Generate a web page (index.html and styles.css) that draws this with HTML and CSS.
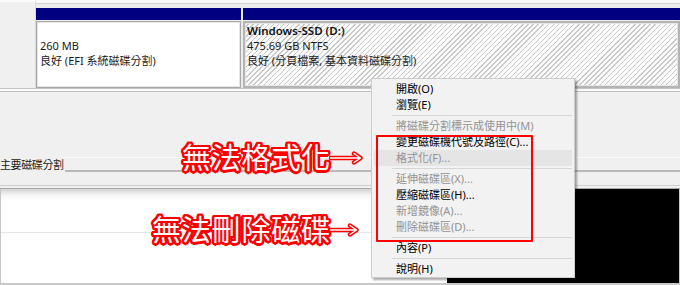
FILE: index.html
```html
<!DOCTYPE html>
<html lang="zh-Hant">
<head>
<meta charset="utf-8">
<title>磁碟管理</title>
<link rel="stylesheet" href="styles.css">
</head>
<body>
<div class="screen">
  <div class="disk">
    <div class="disk-label"></div>
    <div class="parts">
      <div class="part part-efi">
        <div class="part-bar"></div>
        <div class="part-body">
          <div class="pline">&nbsp;</div>
          <div class="pline">260 MB</div>
          <div class="pline">良好 (EFI 系統磁碟分割)</div>
        </div>
      </div>
      <div class="part part-main">
        <div class="part-bar"></div>
        <div class="part-body hatched">
          <div class="pline pname">Windows-SSD (D:)</div>
          <div class="pline">475.69 GB NTFS</div>
          <div class="pline">良好 (分頁檔案, 基本資料磁碟分割)</div>
        </div>
      </div>
    </div>
  </div>
  <div class="disk-sep"></div>
  <div class="mid">
    <div class="legend">
      <span class="legend-text">主要磁碟分割</span>
      <span class="legend-bar"></span>
    </div>
  </div>
  <div class="divider"></div>
  <div class="lower">
    <div class="lower-left"><div class="hline"></div></div>
    <div class="lower-black"></div>
  </div>
  <div class="bottom-edge"></div>

  <div class="menu">
    <div class="item">開啟(O)</div>
    <div class="item">瀏覽(E)</div>
    <div class="sep"></div>
    <div class="item off">將磁碟分割標示成使用中(M)</div>
    <div class="item">變更磁碟機代號及路徑(C)...</div>
    <div class="item off hover">格式化(F)...</div>
    <div class="sep"></div>
    <div class="item off">延伸磁碟區(X)...</div>
    <div class="item">壓縮磁碟區(H)...</div>
    <div class="item off">新增鏡像(A)...</div>
    <div class="item off">刪除磁碟區(D)...</div>
    <div class="sep"></div>
    <div class="item">內容(P)</div>
    <div class="sep"></div>
    <div class="item">說明(H)</div>
  </div>
  <div class="redbox"></div>

  <div class="note note1">
    <span class="note-text">無法格式化</span>
    <svg class="arrow a1" width="34" height="14" viewBox="0 0 34 14">
      <path d="M1.5 7 H31 M25 2.5 L31.5 7 L25 11.5" fill="none" stroke="#f00" stroke-width="4.5" stroke-linecap="round" stroke-linejoin="round"/>
      <path d="M1.5 7 H31 M25 2.5 L31.5 7 L25 11.5" fill="none" stroke="#fff" stroke-width="1.4" stroke-linecap="round" stroke-linejoin="round"/>
    </svg>
  </div>
  <div class="note note2">
    <span class="note-text">無法刪除磁碟</span>
    <svg class="arrow a2" width="30" height="14" viewBox="0 0 30 14">
      <path d="M1.5 7 H27 M21 2.5 L27.5 7 L21 11.5" fill="none" stroke="#f00" stroke-width="4.5" stroke-linecap="round" stroke-linejoin="round"/>
      <path d="M1.5 7 H27 M21 2.5 L27.5 7 L21 11.5" fill="none" stroke="#fff" stroke-width="1.4" stroke-linecap="round" stroke-linejoin="round"/>
    </svg>
  </div>
</div>
</body>
</html>
```

FILE: styles.css
```css
* { box-sizing: border-box; }
html, body { margin: 0; padding: 0; }
body {
  font-family: "Noto Sans", "Noto Sans CJK TC", sans-serif;
  font-size: 11px;
  color: #000;
  background: #f0f0f0;
}
.screen {
  position: relative;
  width: 680px;
  height: 285px;
  overflow: hidden;
  display: flex;
  flex-direction: column;
  background: #f0f0f0;
}

/* disk row */
.disk {
  height: 88px;
  display: flex;
  flex: none;
}
.disk-label {
  width: 36px;
  background: #f0f0f0;
  border-top: 2px solid #fbfbfb;
  border-right: 1px solid #d8d8d8;
}
.parts {
  flex: 1;
  display: flex;
  gap: 2px;
  padding-top: 5px;
  border-top: 3px solid #f9f9f9;
  background: #ececec;
  box-shadow: inset 0 1px 0 #d6d6d6;
}
.part {
  display: flex;
  flex-direction: column;
}
.part-efi { width: 205px; }
.part-main { flex: 1; }
.part-bar {
  height: 12px;
  background: #000080;
}
.part-body {
  flex: 1;
  margin-top: 1px;
  padding: 1px 3px 0;
  background: #fff;
  border: 1px solid #a8a8a8;
  box-shadow: inset 0 0 0 1px #e6e6e6;
}
.hatched {
  border: 2px solid #b4b4b4;
  padding: 0 2px 0;
  background: repeating-linear-gradient(135deg, #fbfbfb 0, #fbfbfb 2.6px, #c9c9c9 2.6px, #c9c9c9 3.6px);
}
.pline {
  line-height: 15px;
  white-space: nowrap;
  color: #1a1a1a;
}
.pname {
  font-size: 11.5px;
  font-weight: 600;
  color: #111;
}

.disk-sep {
  height: 4px;
  flex: none;
  border-top: 1px solid #c4c4c4;
  border-bottom: 1px solid #bdbdbd;
  background: #fafafa;
}

/* middle gray area with legend */
.mid {
  height: 93px;
  flex: none;
  padding-top: 65px;
  background: #f0f0f0;
}
.legend {
  display: flex;
  align-items: flex-end;
  height: 15px;
}
.legend-text {
  line-height: 14px;
  letter-spacing: -0.4px;
  color: #1a1a1a;
}
.legend-bar {
  flex: 1;
  height: 15px;
  margin-left: 1px;
  border-top: 1px solid #fbfbfb;
  border-bottom: 2px solid #b9b9b9;
  background: #f0f0f0;
}

.divider {
  height: 4px;
  flex: none;
  border-top: 1px solid #cfcfcf;
  border-bottom: 1px solid #a9a9a9;
  background: #f0f0f0;
}

.lower {
  flex: 1;
  display: flex;
}
.lower-left {
  flex: 1;
  padding-top: 43px;
  border-left: 1px solid #c6c6c6;
  background: linear-gradient(#d4d4d4 0, #f4f4f4 6px, #fff 12px);
}
.hline {
  height: 1px;
  background: #e6e6e6;
}
.lower-black {
  width: 233px;
  background: #000;
  border-right: 1px solid #c8c8c8;
}
.bottom-edge {
  height: 2px;
  flex: none;
  background: #c8c8c8;
}

/* context menu */
.menu {
  position: absolute;
  left: 371px;
  top: 78px;
  width: 204px;
  padding: 2px 2px 0;
  background: #f2f2f2;
  border: 1px solid #cdcdcd;
  box-shadow: 2px 2px 2px rgba(0, 0, 0, 0.35);
}
.item {
  height: 16px;
  line-height: 16px;
  padding-left: 22px;
  white-space: nowrap;
  color: #000;
}
.item.off { color: #939393; }
.item.hover { background: #e5e5e5; }
.sep {
  height: 1px;
  margin: 2px 0 2px 18px;
  background: #d6d6d6;
}

.redbox {
  position: absolute;
  left: 376px;
  top: 135px;
  width: 157px;
  height: 107px;
  border: 2px solid #ff0000;
  border-radius: 1px;
}

/* annotations */
.note {
  position: absolute;
  display: flex;
  align-items: center;
}
.note1 { left: 182px; top: 142px; }
.note2 { left: 152px; top: 214px; }
.note-text {
  font-family: "Noto Sans CJK TC", sans-serif;
  font-size: 29px;
  font-weight: 400;
  line-height: 29px;
  letter-spacing: 0.8px;
  color: #fff;
  white-space: nowrap;
  text-shadow:
    2.5px 0 #f00, -2.5px 0 #f00, 0 2.5px #f00, 0 -2.5px #f00,
    1.8px 1.8px #f00, -1.8px 1.8px #f00, 1.8px -1.8px #f00, -1.8px -1.8px #f00,
    2.3px 1px #f00, 2.3px -1px #f00, -2.3px 1px #f00, -2.3px -1px #f00,
    1px 2.3px #f00, -1px 2.3px #f00, 1px -2.3px #f00, -1px -2.3px #f00,
    1px 0 #f00, -1px 0 #f00, 0 1px #f00, 0 -1px #f00;
}
.arrow {
  display: block;
  margin-left: -2px;
  margin-top: 2px;
}
```
